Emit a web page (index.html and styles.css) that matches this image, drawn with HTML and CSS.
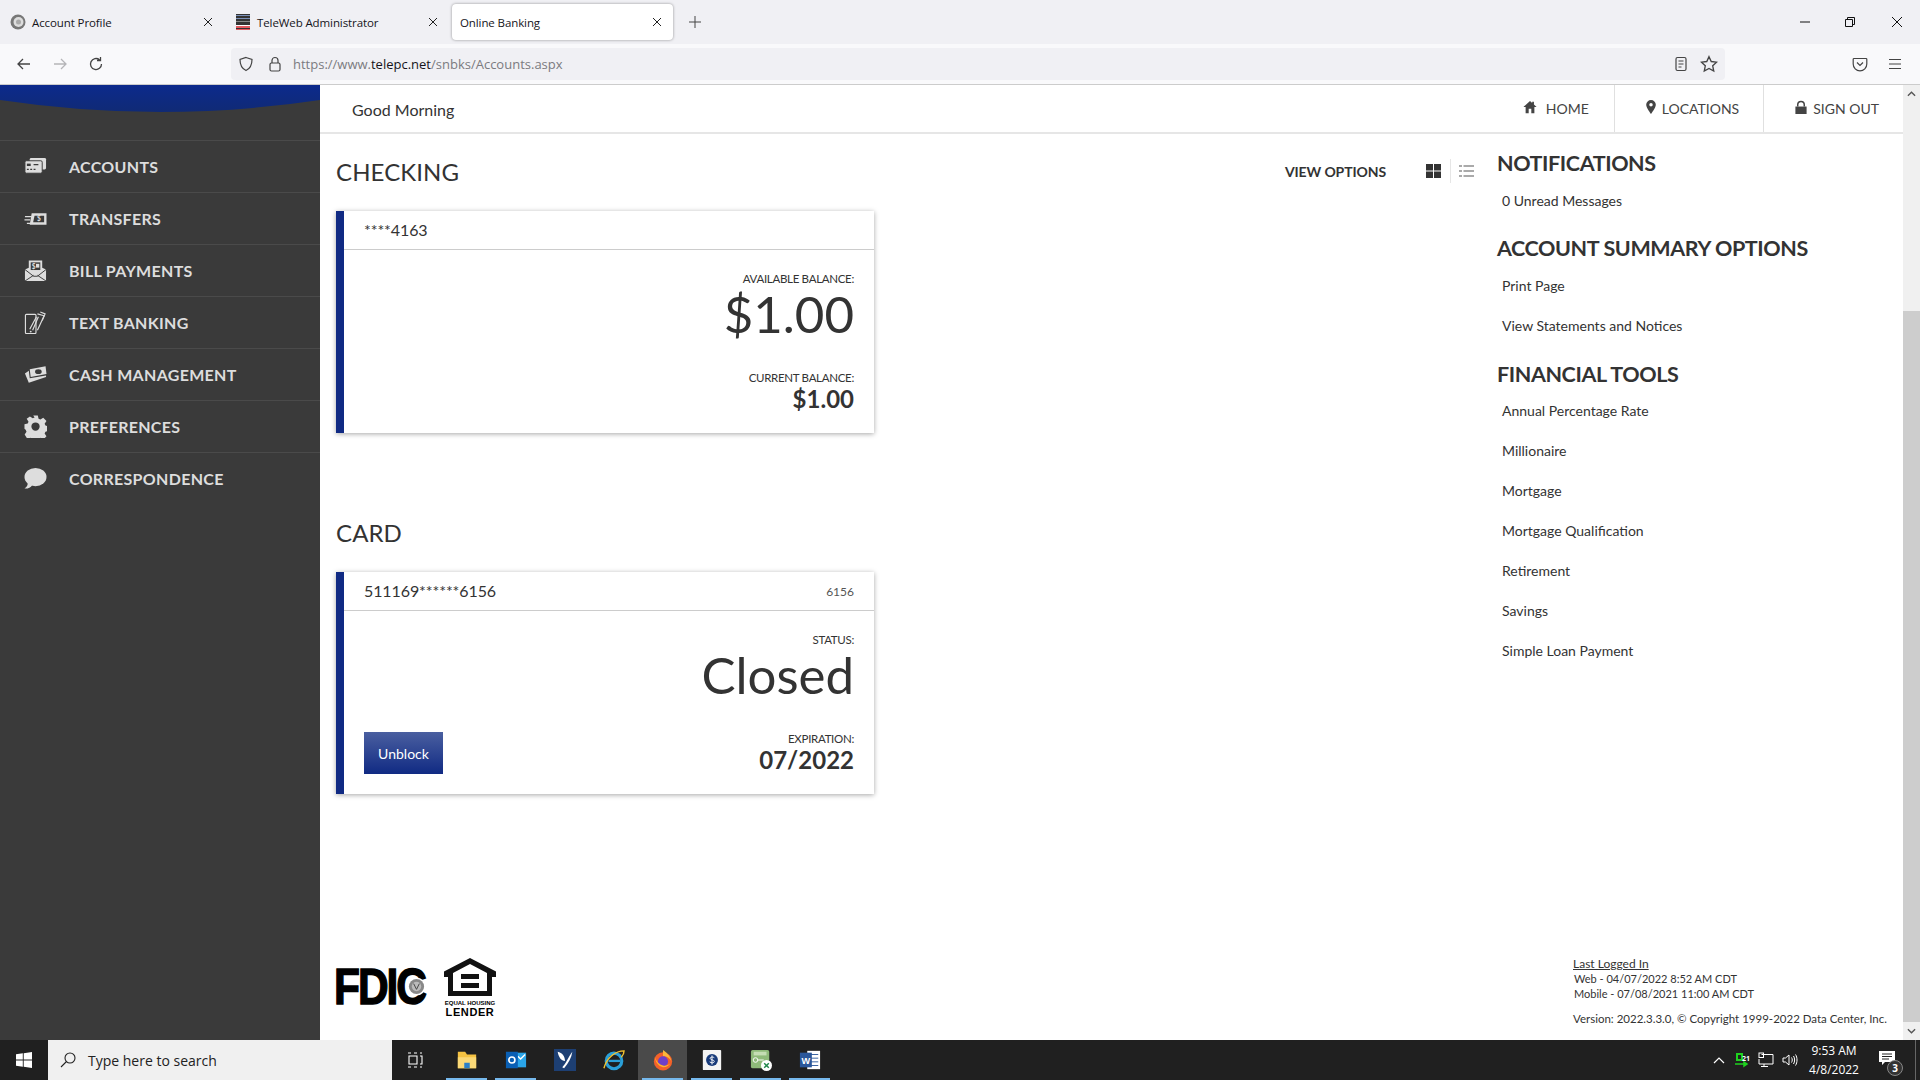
FILE: index.html
```html
<!DOCTYPE html>
<html lang="en">
<head>
  <meta charset="UTF-8">
  <title>Online Banking</title>
  <link rel="stylesheet" href="styles.css">
</head>
<body>
  <div class="tabbar">
    <div class="tab">
      <svg class="favicon" viewBox="0 0 16 16"><circle cx="8" cy="8" r="7.5" fill="#777"/><circle cx="8.5" cy="8" r="5" fill="#ddd"/><circle cx="8.5" cy="8" r="2.5" fill="#aaa"/></svg>
      <span class="tab-title">Account Profile</span>
      <svg class="tab-close" viewBox="0 0 10 10"><path d="M1 1l8 8M9 1L1 9" stroke="#222" fill="none"/></svg>
    </div>
    <div class="tab">
      <svg class="favicon" viewBox="0 0 16 16"><rect x="1" width="14" height="16" fill="#333"/><rect x="1" y="1" width="14" height="1" fill="#7a8fb8"/><rect x="1" y="4" width="14" height="1" fill="#7a8fb8"/><rect x="1" y="7" width="14" height="1" fill="#888"/><rect x="1" y="11" width="14" height="1" fill="#fff"/><rect x="1" y="12" width="14" height="2" fill="#e2595f"/><rect x="1" y="15" width="14" height="1" fill="#e2595f"/></svg>
      <span class="tab-title">TeleWeb Administrator</span>
      <svg class="tab-close" viewBox="0 0 10 10"><path d="M1 1l8 8M9 1L1 9" stroke="#222" fill="none"/></svg>
    </div>
    <div class="tab tab-active">
      <span class="tab-title">Online Banking</span>
      <svg class="tab-close" viewBox="0 0 10 10"><path d="M1 1l8 8M9 1L1 9" stroke="#222" fill="none"/></svg>
    </div>
    <svg class="new-tab" viewBox="0 0 12 12"><path d="M6 0v12M0 6h12" stroke="#444" fill="none"/></svg>
    <div class="window-btns">
      <svg viewBox="0 0 12 12"><path d="M1 6h10" stroke="#111" fill="none"/></svg>
      <svg viewBox="0 0 12 12"><path d="M1.500 3.500h7v7h-7zM3.500 3.500v-2h7v7h-2" stroke="#111" fill="none"/></svg>
      <svg viewBox="0 0 12 12"><path d="M1 1l10 10M11 1L1 11" stroke="#111" fill="none"/></svg>
    </div>
  </div>

  <div class="toolbar">
    <svg class="tool-icon" viewBox="0 0 16 16"><path d="M14 8H2M7 3L2 8l5 5" stroke="#444" stroke-width="1.300" fill="none"/></svg>
    <svg class="tool-icon" viewBox="0 0 16 16"><path d="M2 8h12M9 3l5 5-5 5" stroke="#b5b5b8" stroke-width="1.300" fill="none"/></svg>
    <svg class="tool-icon" viewBox="0 0 16 16"><path d="M13.500 8A5.500 5.500 0 1 1 11.500 3.800M12.500 1v3.500H9" stroke="#444" stroke-width="1.300" fill="none"/></svg>
    <div class="urlbar">
      <svg class="url-icon" viewBox="0 0 16 16"><path d="M8 1.500l6 2c0 5-1.500 9-6 11-4.500-2-6-6-6-11z" stroke="#444" stroke-width="1.200" fill="none"/></svg>
      <svg class="url-icon" viewBox="0 0 16 16"><rect x="3" y="7" width="10" height="8" rx="1.500" stroke="#444" stroke-width="1.200" fill="none"/><path d="M5 7V4.500a3 3 0 0 1 6 0V7" stroke="#444" stroke-width="1.200" fill="none"/></svg>
      <span class="url-text">https://www.<b>telepc.net</b>/snbks/Accounts.aspx</span>
      <svg class="url-icon url-reader" viewBox="0 0 16 16"><rect x="3" y="1.500" width="10" height="13" rx="1.500" stroke="#444" stroke-width="1.200" fill="none"/><path d="M5.500 5h5M5.500 8h5M5.500 11h3" stroke="#444" stroke-width="1.200"/></svg>
      <svg class="url-icon url-star" viewBox="0 0 16 16"><path d="M8 1.500l2 4.300 4.700.6-3.400 3.200.9 4.700L8 12l-4.200 2.300.9-4.700L1.300 6.400 6 5.800z" stroke="#444" stroke-width="1.200" fill="none"/></svg>
    </div>
    <svg class="tool-icon pocket" viewBox="0 0 16 16"><path d="M2 2.500h12a.8.8 0 0 1 .8.8V8A6.800 6.800 0 0 1 1.200 8V3.300a.8.8 0 0 1 .8-.8z" stroke="#444" stroke-width="1.200" fill="none"/><path d="M5 6.500l3 3 3-3" stroke="#444" stroke-width="1.200" fill="none"/></svg>
    <svg class="tool-icon" viewBox="0 0 16 16"><path d="M2 3.500h12M2 8h12M2 12.500h12" stroke="#444" stroke-width="1.200" fill="none"/></svg>
  </div>

  <div class="page">
    <aside class="sidebar">
      <svg class="sidebar-arc" viewBox="0 0 320 55"><defs><linearGradient id="arcfill" x1="0" y1="0" x2="0" y2="1"><stop offset="0" stop-color="#0c2a8c"/><stop offset="1" stop-color="#102a75"/></linearGradient></defs><path d="M0 0H320V15Q160 39 0 15Z" fill="url(#arcfill)"/></svg>
      <nav class="side-nav">
        <a class="nav-item">
          <svg class="nav-icon" viewBox="0 0 24 24"><rect x="6" y="3" width="17" height="12" rx="1.500" fill="#ddd"/><rect x="1" y="6" width="18" height="13" rx="1.500" fill="#ddd" stroke="#3a3a3a"/><path d="M3 15h2M6.500 15h2M10 15h2M10 10h5" stroke="#3a3a3a" stroke-width="1.200"/><rect x="3" y="9" width="4" height="2.500" fill="#3a3a3a"/></svg>
          ACCOUNTS
        </a>
        <a class="nav-item">
          <svg class="nav-icon" viewBox="0 0 24 24"><path d="M8 6.500h15.500v12H6z" fill="#ddd"/><path d="M11 9h10v7H9.500z" fill="#3a3a3a"/><path d="M1 10h7M0.500 13.500h6M3 17h5" stroke="#ddd" stroke-width="1.300"/><text class="nav-icon-dollar" x="13.500" y="15">$</text></svg>
          TRANSFERS
        </a>
        <a class="nav-item">
          <svg class="nav-icon" viewBox="0 0 24 24"><path d="M1 11l4-2V1.500h14V9l4 2v12H1z" fill="#ddd"/><rect x="7" y="3.500" width="10" height="8" fill="#3a3a3a"/><rect x="12.500" y="5" width="3.500" height="4" fill="#ddd"/><text class="nav-icon-dollar" x="8" y="10">$</text><path d="M1 11l9 7h4l9-7M1 23l9-6M23 23l-9-6" stroke="#3a3a3a" fill="none"/></svg>
          BILL PAYMENTS
        </a>
        <a class="nav-item">
          <svg class="nav-icon" viewBox="0 0 24 24"><rect x="1.500" y="3.500" width="11" height="20" rx="1" fill="none" stroke="#ddd" stroke-width="1.200"/><path d="M6 19L13 6M9 20l6-14M14 3l7 2-7 15" stroke="#ddd" stroke-width="1.200" fill="none"/><path d="M17 1l5 2-3 7" stroke="#ddd" stroke-width="1.200" fill="none"/><circle cx="7" cy="21.500" r="1" fill="#ddd"/></svg>
          TEXT BANKING
        </a>
        <a class="nav-item">
          <svg class="nav-icon" viewBox="0 0 24 24"><path d="M1 11l4-3 1 8 17-3v1.500L5 20.500z" fill="#ddd"/><path d="M6 6.500l16.500-3 1 8-16.500 3z" fill="#ddd"/><ellipse cx="15" cy="9" rx="3.500" ry="2.600" fill="#3a3a3a"/></svg>
          CASH MANAGEMENT
        </a>
        <a class="nav-item">
          <svg class="nav-icon" viewBox="0 0 24 24"><path fill="#ddd" fill-rule="evenodd" d="M9.500 0h5l.8 3.500 2 .9 3.100-2 3.500 3.500-2 3.100.9 2 3.500.8v5l-3.500.8-.9 2 2 3.100-3.500 3.500-3.100-2-2 .9-.8 3.500h-5l-.8-3.500-2-.9-3.100 2L.2 20.700l2-3.100-.9-2L0 14.500v-5l3.500-.8.9-2-2-3.100L5.900 1.100l3.100 2 2-.9zM12 7.500a4.500 4.500 0 1 0 0 9 4.500 4.500 0 0 0 0-9z" transform="translate(0.500 0.500) scale(.96)"/></svg>
          PREFERENCES
        </a>
        <a class="nav-item">
          <svg class="nav-icon" viewBox="0 0 24 24"><ellipse cx="12" cy="10.500" rx="11.500" ry="9.500" fill="#ddd"/><path d="M4 16c0 3-1 5-3.500 6.500 3.500.3 6.500-1 8-3.500z" fill="#ddd"/></svg>
          CORRESPONDENCE
        </a>
      </nav>
    </aside>

    <div class="content">
      <header class="topbar">
        <span class="greeting">Good Morning</span>
        <nav class="top-links">
          <a class="top-link top-link-home">
            <svg class="top-icon icon-home" viewBox="0 0 16 16"><path d="M8 1L0.500 8H3v7h3.500v-5h3v5H13V8h2.500L12.500 5.200V2h-2v1.300z" fill="#444"/></svg>
            HOME
          </a>
          <a class="top-link">
            <svg class="top-icon icon-pin" viewBox="2.500 0 11 16"><path fill="#444" fill-rule="evenodd" d="M8 0a5.500 5.500 0 0 0-5.500 5.500C2.500 9 8 16 8 16s5.500-7 5.500-10.500A5.500 5.500 0 0 0 8 0zm0 3.500a2 2 0 1 1 0 4 2 2 0 0 1 0-4z"/></svg>
            LOCATIONS
          </a>
          <a class="top-link">
            <svg class="top-icon icon-lock" viewBox="2 0 12 15"><path fill="#444" d="M2 7h12v8H2z"/><path d="M4.500 7V5a3.500 3.500 0 0 1 7 0v2" stroke="#444" stroke-width="1.600" fill="none"/></svg>
            SIGN OUT
          </a>
        </nav>
      </header>

      <div class="columns">
        <main class="accounts">
          <div class="section-head">
            <h2 class="section-title">CHECKING</h2>
            <div class="view-options">
              <span class="view-label">VIEW OPTIONS</span>
              <svg class="view-icon" viewBox="0 0 15 14"><path d="M0 0h7v6.500H0zM8 0h7v6.500H8zM0 7.500h7V14H0zM8 7.500h7V14H8z" fill="#333"/></svg>
              <span class="view-divider"></span>
              <svg class="view-icon" viewBox="0 0 15 14"><path d="M0 1h3v2H0zM0 6h3v2H0zM0 11h3v2H0zM4.500 1H15v2H4.500zM4.500 6H15v2H4.500zM4.500 11H15v2H4.500z" fill="#aaa"/></svg>
            </div>
          </div>
          <section class="card">
            <div class="card-head"><span class="card-number">****4163</span></div>
            <div class="card-body">
              <div class="card-label">AVAILABLE BALANCE:</div>
              <div class="card-big">$1.00</div>
              <div class="card-foot">
                <div class="card-foot-right">
                  <div class="card-label">CURRENT BALANCE:</div>
                  <div class="card-value">$1.00</div>
                </div>
              </div>
            </div>
          </section>

          <div class="section-head section-head-next">
            <h2 class="section-title">CARD</h2>
          </div>
          <section class="card">
            <div class="card-head"><span class="card-number">511169******6156</span><span class="card-suffix">6156</span></div>
            <div class="card-body">
              <div class="card-label">STATUS:</div>
              <div class="card-big">Closed</div>
              <div class="card-foot">
                <button class="unblock-btn">Unblock</button>
                <div class="card-foot-right">
                  <div class="card-label">EXPIRATION:</div>
                  <div class="card-value">07/2022</div>
                </div>
              </div>
            </div>
          </section>
        </main>

        <aside class="side-panel">
          <h3 class="panel-title">NOTIFICATIONS</h3>
          <a class="panel-link">0 Unread Messages</a>
          <h3 class="panel-title">ACCOUNT SUMMARY OPTIONS</h3>
          <a class="panel-link">Print Page</a>
          <a class="panel-link">View Statements and Notices</a>
          <h3 class="panel-title">FINANCIAL TOOLS</h3>
          <a class="panel-link">Annual Percentage Rate</a>
          <a class="panel-link">Millionaire</a>
          <a class="panel-link">Mortgage</a>
          <a class="panel-link">Mortgage Qualification</a>
          <a class="panel-link">Retirement</a>
          <a class="panel-link">Savings</a>
          <a class="panel-link">Simple Loan Payment</a>
        </aside>
      </div>

      <footer class="footer">
        <div class="logos">
          <div class="fdic">
            <span class="fdic-text">FDIC</span>
            <svg class="fdic-seal" viewBox="0 0 20 20"><circle cx="10" cy="10" r="9.500" fill="#fff"/><circle cx="10" cy="10" r="8" fill="#888"/><circle cx="10" cy="10" r="5" fill="#bbb"/><path d="M7 7l3 6 3-6" stroke="#444" fill="none"/></svg>
          </div>
          <div class="ehl">
            <svg class="ehl-house" viewBox="0 0 52 38"><path fill="#111" fill-rule="evenodd" d="M26 0L52 13.500V19h-4v19H4V19H0V13.500zM26 6L9 15v18h34V15z"/><path fill="#111" d="M17 16h18v5H17zM17 25h18v5H17z"/></svg>
            <span class="ehl-small">EQUAL HOUSING</span>
            <span class="ehl-big">LENDER</span>
          </div>
        </div>
        <div class="login-info">
          <div class="login-title">Last Logged In</div>
          <div class="login-line">Web - 04/07/2022 8:52 AM CDT</div>
          <div class="login-line">Mobile - 07/08/2021 11:00 AM CDT</div>
          <div class="version">Version: 2022.3.3.0, © Copyright 1999-2022 Data Center, Inc.</div>
        </div>
      </footer>
    </div>

    <div class="scrollbar">
      <svg class="scroll-arrow" viewBox="0 0 10 6"><path d="M1 5l4-4 4 4" stroke="#555" stroke-width="1.500" fill="none"/></svg>
      <div class="scroll-track"><div class="scroll-thumb"></div></div>
      <svg class="scroll-arrow" viewBox="0 0 10 6"><path d="M1 1l4 4 4-4" stroke="#555" stroke-width="1.500" fill="none"/></svg>
    </div>
  </div>

  <div class="taskbar">
    <svg class="win-logo" viewBox="0 0 16 16"><path d="M0 2.300L6.800 1.300V7.600H0zM7.700 1.200L16 0V7.600H7.700zM0 8.400H6.800V14.700L0 13.700zM7.700 8.400H16V16L7.700 14.800z" fill="#fff"/></svg>
    <div class="searchbox">
      <svg class="search-icon" viewBox="0 0 16 16"><circle cx="10" cy="6" r="5" stroke="#222" stroke-width="1.100" fill="none"/><path d="M6.500 9.500L1 15" stroke="#222" stroke-width="1.100"/></svg>
      <span class="search-text">Type here to search</span>
    </div>
    <div class="task-apps">
      <div class="task-app task-plain">
        <svg class="task-icon task-view" viewBox="0 0 16 16"><path d="M1 1h3M7 1h3M1 15h3M7 15h3M2 4h8v8H2zM13 1h2M13 4h2v8h-2M13 15h2" stroke="#fff" stroke-width="1.100" fill="none"/></svg>
      </div>
      <div class="task-app task-open">
        <svg class="task-icon" viewBox="0 0 24 24"><path d="M2 3h8l2 3h10v15H2z" fill="#f5c242"/><path d="M2 9h20v12H2z" fill="#fbd977"/><path d="M9 21v-6h6v6z" fill="#2a7fc9"/></svg>
      </div>
      <div class="task-app task-open">
        <svg class="task-icon" viewBox="0 0 24 24"><rect x="8" y="4" width="15" height="16" fill="#2aa4e8"/><path d="M14 8l3 3 5-5" stroke="#fff" stroke-width="1.500" fill="none"/><rect x="1" y="3" width="13" height="18" fill="#0a5fb4"/><circle cx="7.500" cy="12" r="3.300" stroke="#fff" stroke-width="1.800" fill="none"/></svg>
      </div>
      <div class="task-app">
        <svg class="task-icon" viewBox="0 0 24 24"><rect width="24" height="24" fill="#1d3f73"/><path d="M4 3c5 1 8 5 8 10-4 0-7-4-8-10zM20 3c-1 7-4 12-9 18l-2-1c4-4 6-10 11-17z" fill="#fff"/></svg>
      </div>
      <div class="task-app">
        <svg class="task-icon" viewBox="0 0 24 24"><circle cx="12" cy="13" r="8.500" stroke="#2a9fd8" stroke-width="3.400" fill="none"/><path d="M6 13h13" stroke="#2a9fd8" stroke-width="2.500"/><path d="M1 21C4 9 14 2 23 2c0 4-3 7-3 7" stroke="#f4c430" stroke-width="1.500" fill="none"/></svg>
      </div>
      <div class="task-app task-open task-active">
        <svg class="task-icon" viewBox="0 0 24 24"><circle cx="12" cy="13.500" r="10" fill="#f2612a"/><path d="M12 1c3 2 8 6 9 12-3-4-5-5-9-5z" fill="#fcb63a"/><circle cx="12" cy="13.500" r="5.500" fill="#6e3fc8"/><path d="M3 9c1 5 3 9 9 11 4 0 7-2 9-6-1 3-5 5-9 4-4-1-7-4-9-9z" fill="#ffb22c"/></svg>
      </div>
      <div class="task-app task-open">
        <svg class="task-icon" viewBox="0 0 24 24"><rect x="2" y="1" width="20" height="22" rx="1" fill="#f4f4f4"/><circle cx="12" cy="12" r="6.500" fill="#173a7a"/><path d="M14.500 9.500c-1-1-5-1-4.500 1s4.500 1 4.500 3-3.500 2-5 .5M12 7v10" stroke="#fff" fill="none"/></svg>
      </div>
      <div class="task-app task-open">
        <svg class="task-icon" viewBox="0 0 24 24"><rect x="1" y="1" width="20" height="20" rx="2" fill="#8fbb7a"/><rect x="4" y="3" width="14" height="4" fill="#c5deb4"/><circle cx="6" cy="12" r="2.500" stroke="#fff" fill="none"/><path d="M8.500 12H15" stroke="#fff"/><circle cx="18" cy="18" r="6" fill="#fff"/><path d="M15.500 15.500l5 5M20.500 15.500l-5 5" stroke="#21874b" stroke-width="1.600"/></svg>
      </div>
      <div class="task-app task-open">
        <svg class="task-icon" viewBox="0 0 24 24"><rect x="9" y="2" width="14" height="20" fill="#fff"/><path d="M12 6h9M12 10h9M12 14h9M12 18h9" stroke="#2b579a"/><rect x="1" y="4" width="13" height="16" fill="#2b579a"/><text class="word-letter" x="7.500" y="16">W</text></svg>
      </div>
    </div>
    <div class="tray">
      <svg class="tray-chevron" viewBox="0 0 12 8"><path d="M1 7l5-5 5 5" stroke="#fff" stroke-width="1.200" fill="none"/></svg>
      <svg class="tray-icon" viewBox="0 0 16 16"><path d="M2 1h7v8H2zM4 3v4h3V3z" fill="#1fd11f" fill-rule="evenodd"/><path d="M1 12h11M10 10l3 2-3 2z" stroke="#1fd11f" fill="#1fd11f" stroke-width="1.500"/><text class="tray-num" x="8" y="9">21</text></svg>
      <svg class="tray-icon" viewBox="0 0 16 16"><path d="M3.500 2.500H15v9.500H1V7M6 12v2.500M3 14.500h7" stroke="#fff" fill="none"/><rect x="1" y="1" width="4.500" height="4.500" stroke="#fff" fill="none"/></svg>
      <svg class="tray-icon" viewBox="0 0 16 16"><path d="M1 6v4h2.500L7 13V3L3.500 6zM9.500 5.500c1 1.500 1 3.500 0 5M11.500 4c1.500 2.500 1.500 5.500 0 8M13.500 2.500c2 3 2 8 0 11" stroke="#fff" fill="none"/></svg>
      <div class="clock">
        <span>9:53 AM</span>
        <span>4/8/2022</span>
      </div>
      <div class="notify">
        <svg class="notify-icon" viewBox="0 0 16 16"><path d="M0 1h16v11H6l-3 3v-3H0z" fill="#fff"/><path d="M3 4h10M3 6.500h10M3 9h7" stroke="#222"/></svg>
        <span class="notify-badge">3</span>
      </div>
      <span class="show-desktop"></span>
    </div>
  </div>
</body>
</html>
```

FILE: styles.css
```css
* {
  box-sizing: border-box;
}
html, body {
  margin: 0;
  height: 1080px;
  overflow: hidden;
}
body {
  display: flex;
  flex-direction: column;
  font-family: Lato, Arial, sans-serif;
  color: #333;
  background: #fff;
}

/* browser chrome */
.tabbar {
  height: 44px;
  background: #f0f0f4;
  display: flex;
  align-items: center;
  font-family: "Open Sans", sans-serif;
  font-size: 11.5px;
  letter-spacing: -0.1px;
  color: #15141a;
  padding-left: 2px;
}
.tab {
  width: 225px;
  height: 36px;
  display: flex;
  align-items: center;
  padding: 0 14px 0 8px;
  gap: 6px;
}
.tab-active {
  width: 221px;
  padding-right: 11px;
  background: #fff;
  border-radius: 4px;
  box-shadow: 0 0 3px rgba(0, 0, 0, 0.4);
}
.favicon {
  width: 16px;
  height: 16px;
  flex: none;
}
.tab-title {
  flex: 1;
}
.tab-close {
  width: 10px;
  height: 10px;
  flex: none;
}
.new-tab {
  width: 12px;
  height: 12px;
  margin-left: 16px;
}
.window-btns {
  margin-left: auto;
  display: flex;
  gap: 35px;
  padding-right: 17px;
}
.window-btns svg {
  width: 12px;
  height: 12px;
}
.window-btns svg:first-child {
  margin-right: -2px;
}
.toolbar {
  height: 41px;
  background: #f9f9fb;
  border-bottom: 1px solid #ccc;
  display: flex;
  align-items: center;
  padding: 0 17px 0 16px;
  gap: 20px;
}
.tool-icon {
  width: 16px;
  height: 16px;
  flex: none;
}
.urlbar {
  width: 1494px;
  height: 32px;
  margin-left: 107px;
  flex: none;
  background: #f0f0f4;
  border-radius: 4px;
  display: flex;
  align-items: center;
  padding: 0 6px 0 7px;
  gap: 13px;
  font-family: "Open Sans", sans-serif;
  font-size: 13px;
  color: #7b7b80;
}
.url-icon {
  width: 16px;
  height: 16px;
  flex: none;
}
.url-text {
  flex: 1;
  margin-left: -3px;
}
.url-text b {
  font-weight: 400;
  color: #15141a;
}
.url-reader {
  margin-right: -2px;
}
.url-star {
  width: 18px;
  height: 18px;
  margin-right: 1px;
}
.pocket {
  margin-left: 107px;
  margin-right: -1px;
}

/* page */
.page {
  flex: 1;
  display: flex;
  min-height: 0;
}
.sidebar {
  width: 320px;
  flex: none;
  background: #3a3a3a;
}
.sidebar-arc {
  display: block;
  width: 320px;
  height: 55px;
}
.nav-item {
  height: 52px;
  display: flex;
  align-items: center;
  gap: 22px;
  padding-left: 24px;
  border-top: 1px solid #4a4a4a;
  color: #ddd;
  font-size: 16px;
  font-weight: 700;
  letter-spacing: 0.3px;
}
.nav-icon {
  width: 23px;
  height: 23px;
  flex: none;
}
.nav-icon-dollar {
  font-size: 7px;
  font-weight: 700;
  fill: #ddd;
}
.content {
  flex: 1;
  display: flex;
  flex-direction: column;
  min-width: 0;
}
.topbar {
  height: 49px;
  flex: none;
  border-bottom: 2px solid #e6e6e6;
  display: flex;
  justify-content: space-between;
  align-items: stretch;
  padding-left: 32px;
}
.greeting {
  font-size: 16px;
  align-self: center;
  margin-top: 2px;
}
.top-links {
  display: flex;
}
.top-link {
  display: flex;
  align-items: center;
  gap: 6px;
  padding: 0 24px 0 31px;
  border-left: 1px solid #e0e0e0;
  font-size: 14px;
  color: #444;
}
.top-link-home {
  gap: 9px;
  padding-right: 25px;
  border-left: none;
}
.top-icon {
  height: 14px;
  margin-bottom: 4px;
  flex: none;
}
.icon-home {
  width: 14px;
}
.icon-pin {
  width: 10px;
}
.icon-lock {
  width: 12px;
}

.columns {
  flex: 1;
  display: flex;
  min-height: 0;
}
.accounts {
  flex: 1;
  padding: 22px 23px 0 16px;
}
.section-head {
  height: 30px;
  margin-bottom: 25px;
  display: flex;
  justify-content: space-between;
  align-items: center;
}
.section-head-next {
  margin-top: 84px;
}
.section-title {
  margin: 0;
  font-size: 24px;
  font-weight: 400;
  letter-spacing: 0.1px;
}
.view-options {
  display: flex;
  align-items: center;
}
.view-label {
  font-size: 14px;
  font-weight: 700;
  letter-spacing: -0.1px;
  margin-right: 40px;
}
.view-icon {
  width: 15px;
  height: 14px;
}
.view-divider {
  width: 1px;
  height: 24px;
  background: #e6e6e6;
  margin: 0 8px 0 9px;
}
.card {
  width: 538px;
  height: 222px;
  border-left: 8px solid #102a83;
  background: #fff;
  box-shadow: 0 1px 5px rgba(0, 0, 0, 0.35);
  display: flex;
  flex-direction: column;
}
.card-head {
  height: 39px;
  flex: none;
  border-bottom: 1px solid #ccc;
  display: flex;
  justify-content: space-between;
  align-items: center;
  padding: 0 20px 0 20px;
}
.card-number {
  font-size: 16px;
  letter-spacing: -0.1px;
  margin-bottom: 2px;
}
.card-suffix {
  font-size: 12px;
  color: #555;
}
.card-body {
  flex: 1;
  padding: 22px 20px 19px 20px;
  display: flex;
  flex-direction: column;
  text-align: right;
}
.card-label {
  font-size: 11.5px;
  line-height: 14px;
  letter-spacing: -0.3px;
}
.card-big {
  font-size: 51px;
  line-height: 56px;
}
.card-foot {
  margin-top: auto;
  display: flex;
  justify-content: space-between;
  align-items: flex-end;
}
.card-foot-right {
  margin-left: auto;
}
.card-foot-right .card-label {
  margin-bottom: -1px;
}
.card-value {
  font-size: 24px;
  font-weight: 700;
  line-height: 30px;
}
.unblock-btn {
  width: 79px;
  height: 42px;
  margin-bottom: 1px;
  border: none;
  color: #fff;
  font-family: Lato, Arial, sans-serif;
  font-size: 14px;
  background: linear-gradient(#4a5fa0, #102a83);
}

.side-panel {
  width: 406px;
  flex: none;
  padding-top: 14px;
}
.panel-title {
  margin: 12px 0 3px;
  font-size: 21.5px;
  font-weight: 700;
  line-height: 30px;
  letter-spacing: -0.4px;
}
.panel-title:first-child {
  margin-top: 0;
}
.panel-link + .panel-link + .panel-title {
  margin: 13px 0 2px;
}
.panel-link {
  display: block;
  height: 40px;
  line-height: 40px;
  padding-left: 5px;
  font-size: 14px;
}

.footer {
  height: 85px;
  flex: none;
  display: flex;
  justify-content: space-between;
  padding-left: 16px;
}
.logos {
  display: flex;
  gap: 16px;
  color: #000;
}
.fdic {
  position: relative;
  width: 92px;
  height: 36px;
  margin-top: 14px;
  display: flex;
  align-items: center;
}
.fdic-text {
  display: inline-block;
  margin-left: -2px;
  font-family: "Liberation Sans", Arial, sans-serif;
  font-size: 50px;
  font-weight: 700;
  line-height: 36px;
  letter-spacing: -2.4px;
  -webkit-text-stroke: 1.4px #000;
  transform: scaleX(0.85);
  transform-origin: left center;
}
.fdic-seal {
  position: absolute;
  left: 71px;
  top: 8px;
  width: 19px;
  height: 19px;
}
.ehl {
  width: 52px;
  display: flex;
  flex-direction: column;
  align-items: center;
  padding-top: 3px;
  font-family: "Liberation Sans", Arial, sans-serif;
  font-weight: 700;
}
.ehl-house {
  width: 52px;
  height: 38px;
  margin-bottom: 4px;
}
.ehl-small {
  font-size: 6px;
  line-height: 7px;
  white-space: nowrap;
}
.ehl-big {
  font-size: 11px;
  line-height: 11px;
  letter-spacing: 0.6px;
}
.login-info {
  width: 330px;
  font-size: 12px;
  line-height: 15px;
  padding-top: 1px;
}
.login-title {
  text-decoration: underline;
}
.login-line {
  padding-left: 1px;
  font-size: 11px;
}
.version {
  margin-top: 10px;
  font-size: 11.5px;
}

.scrollbar {
  width: 17px;
  flex: none;
  background: #f0f0f0;
  display: flex;
  flex-direction: column;
  align-items: center;
}
.scroll-arrow {
  width: 9px;
  height: 6px;
  margin: 6px 0;
  flex: none;
}
.scroll-track {
  flex: 1;
  width: 100%;
  padding-top: 208px;
  display: flex;
}
.scroll-thumb {
  width: 100%;
  background: #cdcdcd;
}

/* windows taskbar */
.taskbar {
  height: 40px;
  flex: none;
  background: #202020;
  display: flex;
  align-items: center;
  color: #fff;
}
.win-logo {
  width: 16px;
  height: 16px;
  margin: 0 16px;
  flex: none;
}
.searchbox {
  width: 344px;
  height: 40px;
  background: #f0f0f0;
  display: flex;
  align-items: center;
  padding-left: 12px;
  gap: 12px;
  flex: none;
}
.search-icon {
  width: 16px;
  height: 16px;
}
.search-text {
  font-family: "Open Sans", sans-serif;
  font-size: 14px;
  color: #222;
}
.task-apps {
  display: flex;
  margin-left: -1px;
  height: 40px;
}
.task-app {
  width: 49px;
  height: 40px;
  display: flex;
  align-items: center;
  justify-content: center;
  position: relative;
}
.task-plain {
  width: 51px;
  padding-right: 3px;
}
.task-open::after {
  content: "";
  position: absolute;
  left: 4px;
  right: 4px;
  bottom: 0;
  height: 2px;
  background: #76b9ed;
}
.task-active {
  background: #4a4a4a;
}
.task-icon {
  width: 22px;
  height: 22px;
}
.task-view {
  width: 16px;
  height: 16px;
}
.word-letter {
  font-size: 10px;
  font-weight: 700;
  fill: #fff;
  text-anchor: middle;
  font-family: "Liberation Sans", sans-serif;
}
.tray {
  margin-left: auto;
  display: flex;
  align-items: center;
  height: 40px;
  font-family: "Open Sans", sans-serif;
}
.tray-chevron {
  width: 12px;
  height: 8px;
  margin-right: 5px;
}
.tray-icon {
  width: 16px;
  height: 16px;
  margin: 0 4px;
}
.tray-num {
  font-size: 7px;
  font-weight: 700;
  fill: #fff;
}
.clock {
  width: 68px;
  margin-left: -2px;
  display: flex;
  flex-direction: column;
  align-items: center;
  font-size: 12px;
  line-height: 19px;
}
.notify {
  position: relative;
  width: 38px;
  height: 40px;
  display: flex;
  align-items: center;
  justify-content: center;
}
.notify-icon {
  width: 16px;
  height: 16px;
  margin-bottom: 4px;
}
.notify-badge {
  position: absolute;
  left: 19px;
  top: 20px;
  width: 16px;
  height: 16px;
  border-radius: 50%;
  background: #333;
  border: 1px solid #888;
  font-size: 10px;
  font-weight: 700;
  line-height: 14px;
  text-align: center;
}
.show-desktop {
  width: 5px;
  height: 40px;
  margin-left: 9px;
  border-left: 1px solid #666;
}
```
